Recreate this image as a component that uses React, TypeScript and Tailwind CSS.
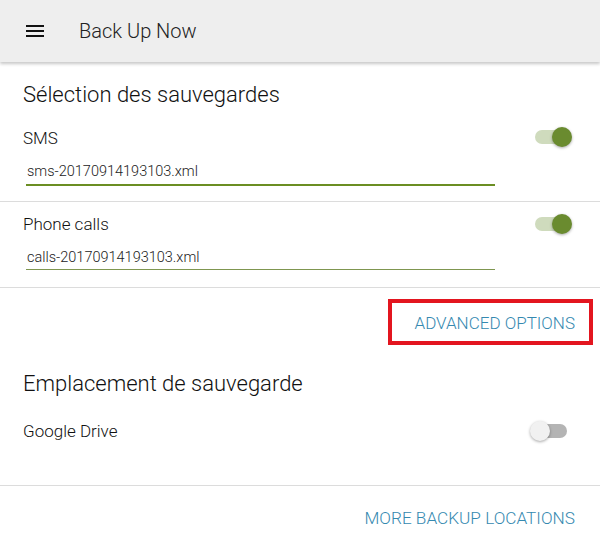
import React from "react";

function Switch({ on, className = "" }: { on: boolean; className?: string }) {
  return (
    <div className={"relative w-[37px] h-[20px] " + className}>
      <div
        className={
          "absolute top-[3px] h-[14px] rounded-full " +
          (on ? "left-0 right-[3px] bg-[#cfdbbd]" : "left-[3px] right-0 bg-[#b4b4b4]")
        }
      />
      <div
        className={
          "absolute top-0 w-[20px] h-[20px] rounded-full shadow-[0_1px_3px_rgba(0,0,0,0.35)] " +
          (on ? "right-0 bg-[#6a8b2f]" : "left-0 bg-[#f1f1f1]")
        }
      />
    </div>
  );
}

export default function App() {
  return (
    <div
      className="w-[600px] h-[558px] bg-white overflow-hidden text-[#212121]"
      style={{ fontFamily: "Roboto, 'Liberation Sans', sans-serif" }}
    >
      {/* Header */}
      <div className="relative z-10 h-[62px] bg-[#eeeeee] flex items-center shadow-[0_2px_3px_rgba(0,0,0,0.22)]">
        <div className="ml-[26px] w-[18px] flex flex-col gap-[3px]">
          <div className="h-[2px] bg-[#111]" />
          <div className="h-[2px] bg-[#111]" />
          <div className="h-[2px] bg-[#111]" />
        </div>
        <div className="ml-[35px] text-[20px] leading-[28px] font-light text-[#222]">Back Up Now</div>
      </div>

      {/* Section 1 */}
      <div className="pt-[19px] px-[23px] h-[28px] box-content text-[22px] leading-[28px] font-light text-[#111]">
        Sélection des sauvegardes
      </div>

      <div className="mt-[18px] flex items-center justify-between pl-[23px] pr-[28px] h-[24px]">
        <div className="mb-[2px] text-[17px] leading-[24px] font-light text-[#111]">SMS</div>
        <Switch on={true} className="mt-[-5px]" />
      </div>
      <div className="mt-[11px] ml-[26px] w-[469px] border-b-2 border-[#6b8e23] pb-[2px]">
        <div className="pl-[1px] text-[14.5px] leading-[20px] font-light text-[#222]">sms-20170914193103.xml</div>
      </div>
      <div className="mt-[15px] h-px bg-[#dcdcdc]" />

      <div className="mt-[11px] flex items-center justify-between pl-[23px] pr-[28px] h-[24px]">
        <div className="mb-[2px] text-[17px] leading-[24px] font-light text-[#111]">Phone calls</div>
        <Switch on={true} className="mt-[-3px]" />
      </div>
      <div className="mt-[11px] ml-[26px] w-[469px] border-b border-[#7f9650] pb-[1px]">
        <div className="pl-[1px] text-[14.5px] leading-[20px] font-light text-[#222]">calls-20170914193103.xml</div>
      </div>
      <div className="mt-[17px] h-px bg-[#dcdcdc]" />

      {/* Advanced options */}
      <div className="mt-[11px] flex justify-end pr-[7px]">
        <div className="w-[205px] h-[46px] border-[4px] border-[#e3151f] flex items-center justify-end pr-[14px]">
          <span className="text-[17px] leading-[20px] font-light text-[#3589b0] mt-[1px]">ADVANCED OPTIONS</span>
        </div>
      </div>

      {/* Section 2 */}
      <div className="mt-[25px] px-[23px] text-[22px] leading-[28px] font-light text-[#111]">Emplacement de sauvegarde</div>
      <div className="mt-[22px] flex items-center justify-between pl-[23px] pr-[33px] h-[24px]">
        <div className="mb-[2px] text-[17px] leading-[24px] font-light text-[#111]">Google Drive</div>
        <Switch on={false} className="mt-[-2px]" />
      </div>
      <div className="mt-[41px] h-px bg-[#dcdcdc]" />

      <div className="mt-[22px] flex justify-end pr-[25px]">
        <span className="text-[17.2px] leading-[20px] font-light text-[#3589b0]">MORE BACKUP LOCATIONS</span>
      </div>
    </div>
  );
}
